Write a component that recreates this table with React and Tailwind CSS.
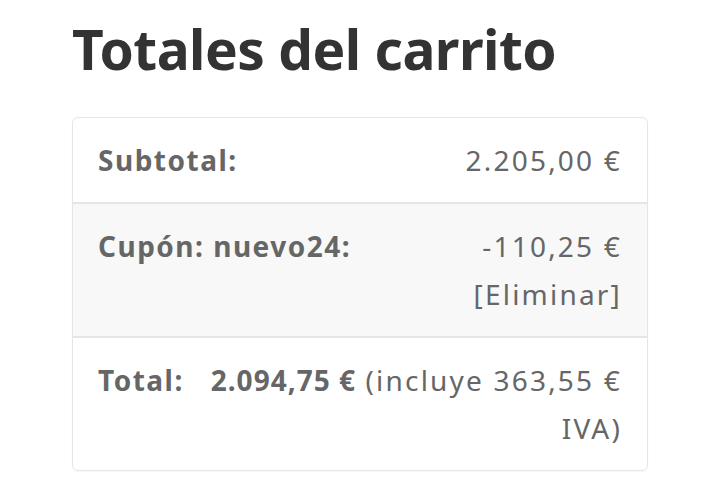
export default function App() {
  return (
    <div className="min-h-[487px] bg-white px-[72px] pt-[16px] font-['Noto_Sans',sans-serif]">
      <h2 className="text-[55px] font-bold leading-[66px] text-[#333] tracking-[-0.5px]">
        Totales del carrito
      </h2>

      <div className="mt-[35px] overflow-hidden rounded-md border border-[#e6e6e6] text-[28px] leading-[48px] tracking-[2.2px] text-[#666] shadow-[0_1px_2px_rgba(0,0,0,0.04)]">
        {/* Subtotal */}
        <div className="flex items-start justify-between px-[25px] py-[18px]">
          <span className="font-bold tracking-[1.5px]">Subtotal:</span>
          <span>2.205,00 €</span>
        </div>

        {/* Cupón */}
        <div className="flex items-start justify-between border-t-2 border-[#e6e6e6] bg-[#f8f8f8] px-[25px] py-[18px]">
          <span className="font-bold tracking-[1.5px]">Cupón: nuevo24:</span>
          <span className="text-right">
            -110,25 €
            <br />
            <a href="#" className="text-[#666]">[Eliminar]</a>
          </span>
        </div>

        {/* Total */}
        <div className="flex items-start gap-[20px] border-t-2 border-[#e6e6e6] px-[25px] py-[18px]">
          <span className="shrink-0 font-bold tracking-[1.5px]">Total:</span>
          <span className="flex-1 text-right">
            <strong className="font-bold tracking-[1px]">2.094,75 €</strong> (incluye 363,55 € IVA)
          </span>
        </div>
      </div>
    </div>
  );
}
